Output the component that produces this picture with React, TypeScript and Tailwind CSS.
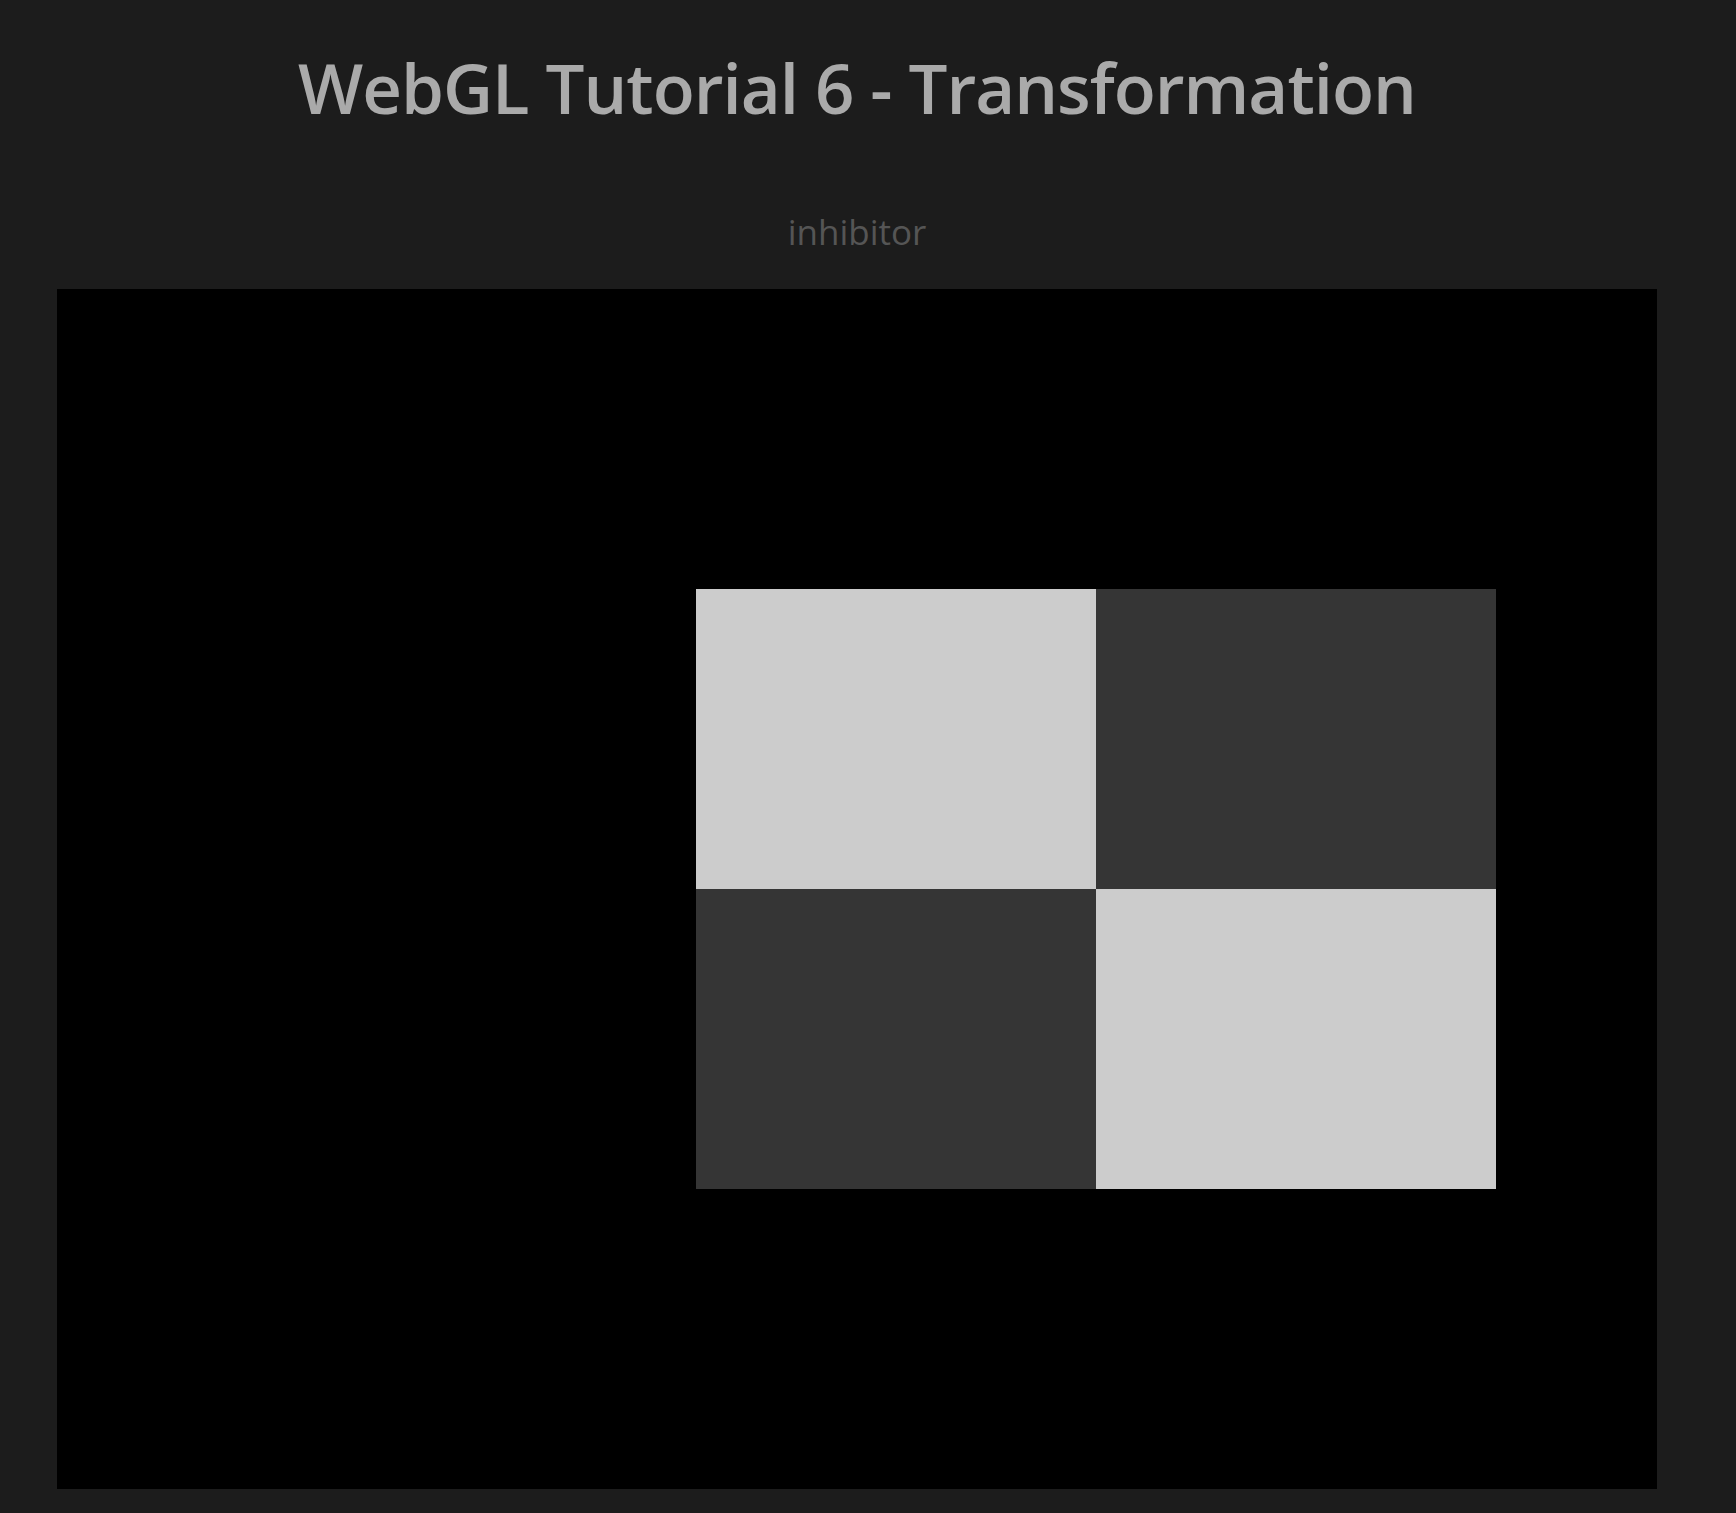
const Checker = () => {
  return (
    <div className="grid grid-cols-2 w-[800px] h-[600px]">
      <div className="bg-[#cccccc]" />
      <div className="bg-[#353535]" />
      <div className="bg-[#353535]" />
      <div className="bg-[#cccccc]" />
    </div>
  );
};

export default function App() {
  return (
    <div className="min-h-[1513px] bg-[#1c1c1c] font-['Open_Sans',sans-serif]">
      <div className="w-[1714px] flex flex-col items-center">
        <h1 className="mt-[37px] text-[69px] leading-[100px] font-semibold text-[#aaaaaa] tracking-[-1px]">
          WebGL Tutorial 6 - Transformation
        </h1>
        <p className="mt-[75px] text-[35px] leading-[40px] text-[#555555]">inhibitor</p>
        <div className="mt-[37px] w-[1600px] h-[1200px] bg-black pl-[639px] pt-[300px]">
          <Checker />
        </div>
      </div>
    </div>
  );
}
